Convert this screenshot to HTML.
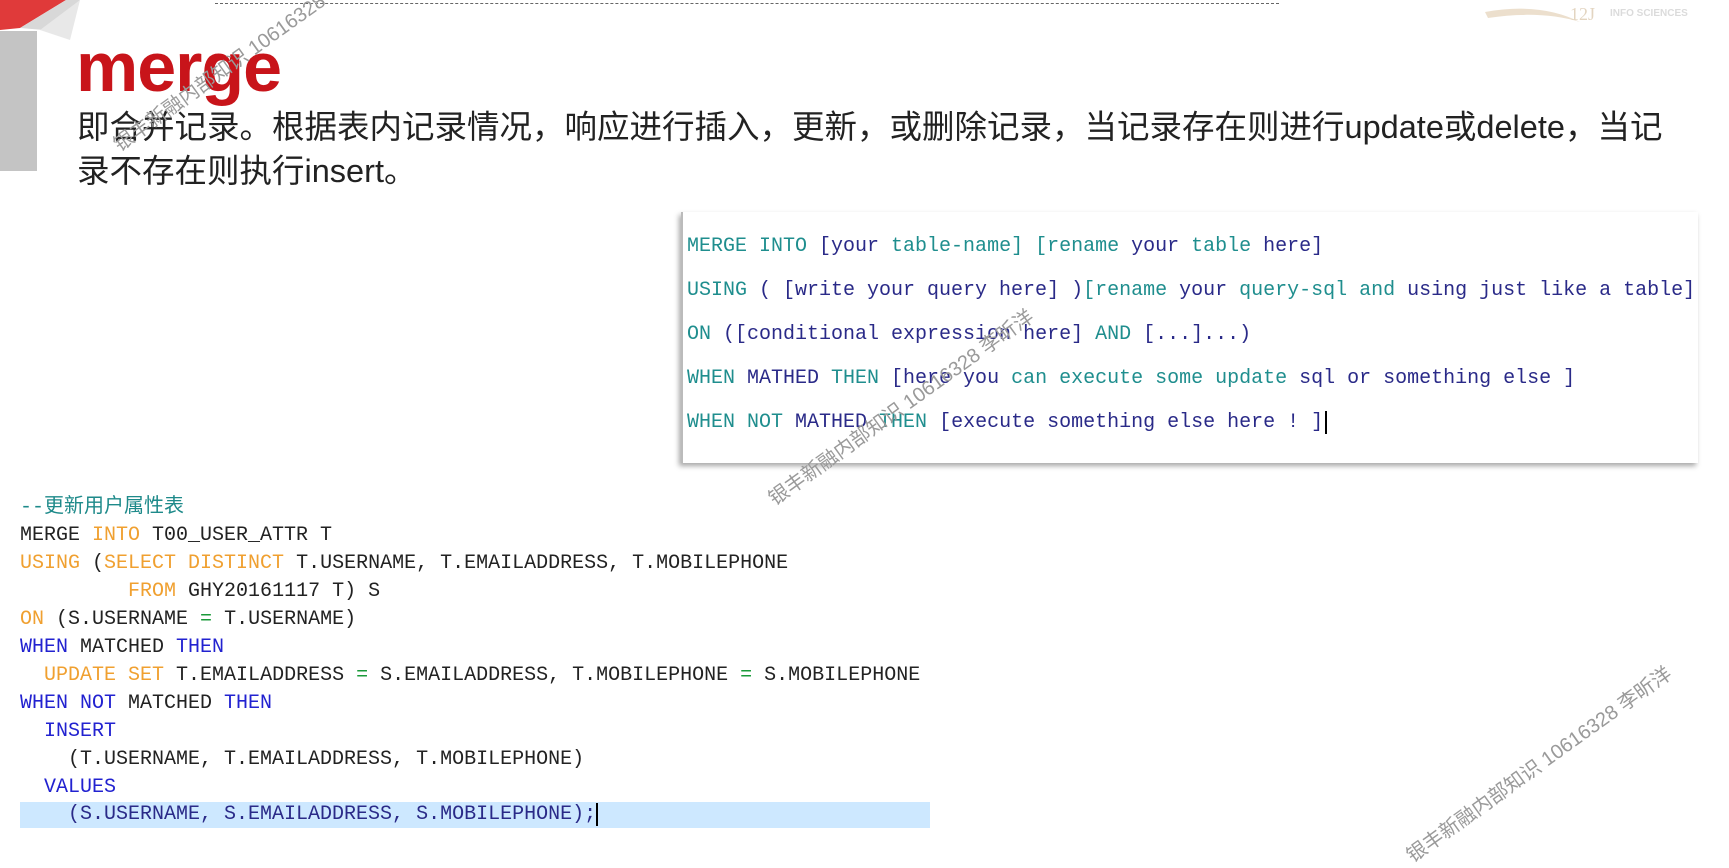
<!DOCTYPE html>
<html><head><meta charset="utf-8">
<style>
*{margin:0;padding:0;box-sizing:border-box}
body{width:1729px;height:860px;background:#fff;position:relative;overflow:hidden;font-family:"Liberation Sans","Noto Sans CJK SC",sans-serif}
.abs{position:absolute}
.dash{left:215px;top:3px;width:1064px;border-top:1.5px dashed #666}
.bar{left:0;top:31px;width:37px;height:140px;background:#c4c4c4}
.title{left:76px;top:22px;font-size:70px;font-weight:bold;color:#c8141a;letter-spacing:-1px;line-height:90px}
.desc{left:77px;top:105px;font-size:32.5px;color:#222;line-height:44px;width:1650px}
.box{left:681px;top:212px;width:1017px;height:251px;background:#fff;box-shadow:-2px 3px 5px rgba(0,0,0,.35);border-left:2px solid #bbb}
.mono{font-family:"Liberation Mono","Noto Sans CJK SC",monospace;font-size:20px;white-space:pre}
.bl{position:absolute;left:4px;line-height:24px}
.t{color:#1f8e8e}.n{color:#2a2a88}
.c3{position:absolute;left:20px;line-height:28px}
.o{color:#f0a030}.k{color:#2222d0}.g{color:#1a9a3a}.cm{color:#1e8a8a}.b{color:#222}
.hl{left:20px;top:802px;width:910px;height:26px;background:#cde8ff}
.wm{position:absolute;font-size:20px;color:#9a9a9a;white-space:nowrap;transform:translate(-50%,-50%) rotate(-35.6deg);font-family:"Liberation Sans","Noto Sans CJK SC",sans-serif}
</style></head><body>
<svg class="abs" style="left:0;top:0" width="110" height="60"><polygon points="0,0 66,0 20,28 0,30" fill="#e03a3a"/><polygon points="20,28 66,0 80,0 44,30" fill="#d8d8d8"/><polygon points="40,30 80,0 70,40" fill="#e8e8e8"/></svg>
<div class="abs dash"></div>
<div class="abs bar"></div>
<div class="abs title">merge</div>
<div class="abs desc">即合并记录。根据表内记录情况，响应进行插入，更新，或删除记录，当记录存在则进行update或delete，当记<br>录不存在则执行insert。</div>
<svg class="abs" style="left:1480px;top:0" width="249" height="40" opacity="0.35"><path d="M5,12 Q60,2 100,22 Q60,10 8,18 Z" fill="#c9a572"/><text x="90" y="20" font-size="18" fill="#b08850" font-family="Liberation Serif">12J</text><text x="130" y="16" font-size="10" font-weight="bold" fill="#999" font-family="Liberation Sans">INFO SCIENCES</text></svg>

<div class="abs box mono">
<div class="bl" style="top:23px"><span class="t">MERGE INTO </span><span class="n">[your </span><span class="t">table-name] [rename </span><span class="n">your </span><span class="t">table </span><span class="n">here]</span></div>
<div class="bl" style="top:67px"><span class="t">USING </span><span class="n">( [write your query here] )</span><span class="t">[rename </span><span class="n">your </span><span class="t">query-sql and </span><span class="n">using just like a table]</span></div>
<div class="bl" style="top:111px"><span class="t">ON </span><span class="n">([conditional expression here] </span><span class="t">AND </span><span class="n">[...]...)</span></div>
<div class="bl" style="top:155px"><span class="t">WHEN </span><span class="n">MATHED </span><span class="t">THEN </span><span class="n">[here you </span><span class="t">can execute some update </span><span class="n">sql or something else ]</span></div>
<div class="bl" style="top:199px"><span class="t">WHEN NOT </span><span class="n">MATHED </span><span class="t">THEN </span><span class="n">[execute something else here ! ]</span><span style="border-left:2px solid #000;margin-left:2px"> </span></div>
</div>

<div class="abs hl"></div>
<div class="mono">
<div class="c3" style="top:494px"><span class="cm">--更新用户属性表</span></div>
<div class="c3 b" style="top:522px">MERGE <span class="o">INTO</span> T00_USER_ATTR T</div>
<div class="c3 b" style="top:550px"><span class="o">USING</span> (<span class="o">SELECT DISTINCT</span> T.USERNAME, T.EMAILADDRESS, T.MOBILEPHONE</div>
<div class="c3 b" style="top:578px">         <span class="o">FROM</span> GHY20161117 T) S</div>
<div class="c3 b" style="top:606px"><span class="o">ON</span> (S.USERNAME <span class="g">=</span> T.USERNAME)</div>
<div class="c3 b" style="top:634px"><span class="k">WHEN</span> MATCHED <span class="k">THEN</span></div>
<div class="c3 b" style="top:662px">  <span class="o">UPDATE SET</span> T.EMAILADDRESS <span class="g">=</span> S.EMAILADDRESS, T.MOBILEPHONE <span class="g">=</span> S.MOBILEPHONE</div>
<div class="c3 b" style="top:690px"><span class="k">WHEN NOT</span> MATCHED <span class="k">THEN</span></div>
<div class="c3 b" style="top:718px">  <span class="k">INSERT</span></div>
<div class="c3 b" style="top:746px">    (T.USERNAME, T.EMAILADDRESS, T.MOBILEPHONE)</div>
<div class="c3 b" style="top:774px">  <span class="k">VALUES</span></div>
<div class="c3" style="top:801px;color:#2a2a88">    (S.USERNAME, S.EMAILADDRESS, S.MOBILEPHONE);<span style="border-left:2px solid #000"> </span></div>
</div>

<div class="wm" style="left:245px;top:52px">银丰新融内部知识 10616328 李昕洋</div>
<div class="wm" style="left:900px;top:406px">银丰新融内部知识 10616328 李昕洋</div>
<div class="wm" style="left:1538px;top:763px">银丰新融内部知识 10616328 李昕洋</div>
</body></html>
